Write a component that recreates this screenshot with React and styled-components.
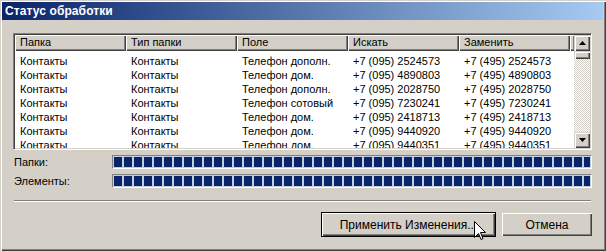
import React from "react";
import styled, { createGlobalStyle } from "styled-components";

const GlobalStyle = createGlobalStyle`
    html, body {
        margin: 0;
        padding: 0;
        background: #d4d0c8;
    }
    body {
        font-family: "Liberation Sans", Arial, sans-serif;
        font-size: 11px;
        color: #000;
    }
`;

const Window = styled.div`
    position: relative;
    width: 606px;
    height: 251px;
    box-sizing: border-box;
    background: #d4d0c8;
    padding: 2px 3px 3px 2px;
    box-shadow: inset 1px 1px 0 #d4d0c8, inset 2px 2px 0 #fff,
        inset -1px -1px 0 #404040, inset -2px -2px 0 #808080;
    display: flex;
    flex-direction: column;
    overflow: hidden;
`;

const TitleBar = styled.div`
    height: 18px;
    display: flex;
    align-items: center;
    padding-left: 3px;
    background: linear-gradient(to right, #0a246a, #a6caf0);
    color: #fff;
    font-weight: bold;
    font-size: 12px;
    letter-spacing: 0.1px;
`;

const Body = styled.div`
    display: flex;
    flex-direction: column;
    padding: 13px 11px 0 11px;
`;

const ListBox = styled.div`
    height: 117px;
    box-sizing: border-box;
    background: #fff;
    border-top: 1px solid #808080;
    border-left: 1px solid #808080;
    border-right: 1px solid #fff;
    border-bottom: 1px solid #fff;
    box-shadow: inset 1px 1px 0 #404040, inset -1px -1px 0 #d4d0c8;
    padding: 1px;
    display: flex;
    overflow: hidden;
`;

const ListMain = styled.div`
    flex: 1;
    display: flex;
    flex-direction: column;
    overflow: hidden;
`;

const HeaderRow = styled.div`
    display: flex;
    height: 16px;
    flex: none;
    background: #d4d0c8;
`;

const HeaderCell = styled.div`
    width: ${({ $w }) => $w}px;
    flex: ${({ $fill }) => ($fill ? "1" : "none")};
    box-sizing: border-box;
    padding-left: 5px;
    line-height: 14px;
    white-space: nowrap;
    box-shadow: inset 1px 1px 0 #fff, inset -1px -1px 0 #404040,
        inset -2px -2px 0 #808080;
`;

const Rows = styled.div`
    padding-top: 3px;
`;

const Row = styled.div`
    display: flex;
    height: 14px;
    line-height: 14px;
`;

const Cell = styled.div`
    width: ${({ $w }) => $w}px;
    flex: none;
    box-sizing: border-box;
    padding-left: 5px;
    white-space: nowrap;
    overflow: hidden;
`;

const ScrollBar = styled.div`
    width: 16px;
    flex: none;
    display: flex;
    flex-direction: column;
    background-color: #fff;
    background-image: repeating-conic-gradient(#d4d0c8 0 25%, #fff 0 50%);
    background-size: 2px 2px;
`;

const ScrollButton = styled.div`
    width: 16px;
    height: 16px;
    box-sizing: border-box;
    background: #d4d0c8;
    box-shadow: inset 1px 1px 0 #d4d0c8, inset 2px 2px 0 #fff,
        inset -1px -1px 0 #404040, inset -2px -2px 0 #808080;
    display: flex;
    align-items: center;
    justify-content: center;
    flex: none;
`;

const Thumb = styled(ScrollButton)`
    height: 8px;
`;

const Spacer = styled.div`
    flex: 1;
`;

const ProgressRow = styled.div`
    display: flex;
    align-items: center;
    height: 14px;
    margin-top: ${({ $top }) => $top}px;
`;

const ProgressLabel = styled.div`
    width: 98px;
    padding-left: 1px;
    flex: none;
`;

const ProgressBar = styled.div`
    flex: 1;
    height: 14px;
    box-sizing: border-box;
    border-top: 1px solid #808080;
    border-left: 1px solid #808080;
    border-right: 1px solid #fff;
    border-bottom: 1px solid #fff;
    padding: 1px 1px 1px 1px;
    background: #c3cde0;
`;

const ProgressFill = styled.div`
    height: 100%;
    background: repeating-linear-gradient(
        to right,
        #0a246a 0 8px,
        #c3cde0 8px 10px
    );
`;

const Separator = styled.div`
    margin-top: 12px;
    margin-left: 1px;
    margin-right: 1px;
    height: 0;
    border-top: 1px solid #808080;
    border-bottom: 1px solid #fff;
`;

const ButtonRow = styled.div`
    display: flex;
    justify-content: flex-end;
    align-items: center;
    gap: 6px;
    margin-top: 10px;
    padding-right: 0;
`;

const Button = styled.div`
    width: ${({ $w }) => $w}px;
    height: ${({ $default }) => ($default ? 25 : 23)}px;
    box-sizing: border-box;
    background: #d4d0c8;
    display: flex;
    align-items: center;
    justify-content: center;
    border: ${({ $default }) => ($default ? "1px solid #000" : "none")};
    box-shadow: inset 1px 1px 0 #fff, inset -1px -1px 0 #404040,
        inset -2px -2px 0 #808080;
    font-size: 12px;
`;

const Cursor = styled.svg`
    position: absolute;
    left: 474px;
    top: 221px;
`;

const widths = [111, 111, 111, 111, 111];
const headers = ["Папка", "Тип папки", "Поле", "Искать", "Заменить"];

const rows = [
    ["Телефон дополн.", "2524573"],
    ["Телефон дом.", "4890803"],
    ["Телефон дополн.", "2028750"],
    ["Телефон сотовый", "7230241"],
    ["Телефон дом.", "2418713"],
    ["Телефон дом.", "9440920"],
    ["Телефон дом.", "9440351"],
];

const Arrow = ({ up }) => (
    <svg width="7" height="4" viewBox="0 0 7 4">
        <path d={up ? "M3.5 0 L7 4 L0 4 Z" : "M0 0 L7 0 L3.5 4 Z"} fill="#000" />
    </svg>
);

export default function App() {
    return (
        <>
            <GlobalStyle />
            <Window>
                <TitleBar>Статус обработки</TitleBar>
                <Body>
                    <ListBox>
                        <ListMain>
                            <HeaderRow>
                                {headers.map((h, i) => (
                                    <HeaderCell key={h} $w={widths[i]}>
                                        {h}
                                    </HeaderCell>
                                ))}
                                <HeaderCell $fill />
                            </HeaderRow>
                            <Rows>
                                {rows.map(([field, num], i) => (
                                    <Row key={i}>
                                        <Cell $w={111}>Контакты</Cell>
                                        <Cell $w={111}>Контакты</Cell>
                                        <Cell $w={111}>{field}</Cell>
                                        <Cell $w={111}>+7 (095) {num}</Cell>
                                        <Cell $w={111}>+7 (495) {num}</Cell>
                                    </Row>
                                ))}
                            </Rows>
                        </ListMain>
                        <ScrollBar>
                            <ScrollButton>
                                <Arrow up />
                            </ScrollButton>
                            <Thumb />
                            <Spacer />
                            <ScrollButton>
                                <Arrow />
                            </ScrollButton>
                        </ScrollBar>
                    </ListBox>
                    <ProgressRow $top={5}>
                        <ProgressLabel>Папки:</ProgressLabel>
                        <ProgressBar>
                            <ProgressFill />
                        </ProgressBar>
                    </ProgressRow>
                    <ProgressRow $top={5}>
                        <ProgressLabel>Элементы:</ProgressLabel>
                        <ProgressBar>
                            <ProgressFill />
                        </ProgressBar>
                    </ProgressRow>
                    <Separator />
                    <ButtonRow>
                        <Button $default $w={175}>
                            Применить Изменения...
                        </Button>
                        <Button $w={90}>Отмена</Button>
                    </ButtonRow>
                </Body>
                <Cursor width="13" height="21" viewBox="0 0 13 21">
                    <path
                        d="M0.5 0.5 L0.5 16.5 L4.5 12.5 L7 18.5 L9 17.5 L6.5 11.5 L11.5 11.5 Z"
                        fill="#fff"
                        stroke="#000"
                        strokeWidth="1"
                    />
                </Cursor>
            </Window>
        </>
    );
}
